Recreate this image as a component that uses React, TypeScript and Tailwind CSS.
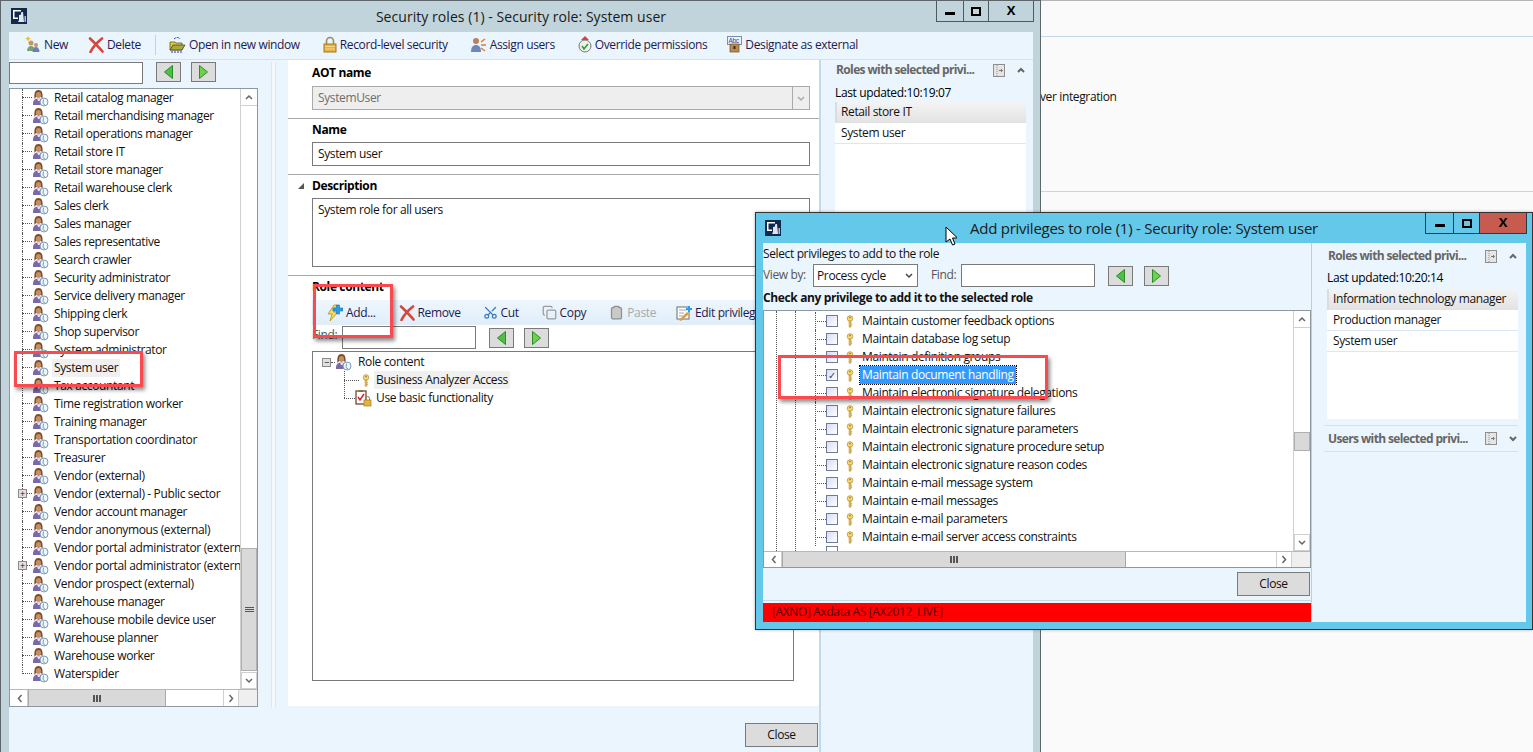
import React from 'react';
import { Scissors, Copy, Clipboard } from 'lucide-react';

const ROLES = [
  'Retail catalog manager', 'Retail merchandising manager', 'Retail operations manager', 'Retail store IT',
  'Retail store manager', 'Retail warehouse clerk', 'Sales clerk', 'Sales manager', 'Sales representative',
  'Search crawler', 'Security administrator', 'Service delivery manager', 'Shipping clerk', 'Shop supervisor',
  'System administrator', 'System user', 'Tax accountant', 'Time registration worker', 'Training manager',
  'Transportation coordinator', 'Treasurer', 'Vendor (external)', 'Vendor (external) - Public sector',
  'Vendor account manager', 'Vendor anonymous (external)', 'Vendor portal administrator (extern',
  'Vendor portal administrator (extern', 'Vendor prospect (external)', 'Warehouse manager',
  'Warehouse mobile device user', 'Warehouse planner', 'Warehouse worker', 'Waterspider',
];

const EXPANDABLE = [22, 26];

const PRIVILEGES = [
  'Maintain customer feedback options', 'Maintain database log setup', 'Maintain definition groups',
  'Maintain document handling', 'Maintain electronic signature delegations', 'Maintain electronic signature failures',
  'Maintain electronic signature parameters', 'Maintain electronic signature procedure setup',
  'Maintain electronic signature reason codes', 'Maintain e-mail message system', 'Maintain e-mail messages',
  'Maintain e-mail parameters', 'Maintain e-mail server access constraints',
];

function UserIcon() {
  return (
    <svg width="17" height="18" viewBox="0 0 17 18" className="shrink-0">
      <path d="M1 15c0-4 2-5.500 5.500-5.500S12 11 12 13v3H1z" fill="#7a68ad" />
      <path d="M5 9.500h3.500L7.500 12H6z" fill="#e8e4ee" />
      <path d="M2.500 10C2 4 3 1 6.500 1S11 4 10.500 9.500L9 8H4z" fill="#7b4d28" />
      <ellipse cx="6.500" cy="6" rx="2.600" ry="3" fill="#c58f66" />
      <circle cx="12" cy="13" r="4" fill="#eef5fb" stroke="#7f9cb8" />
      <path d="M11.500 10.500l-.5 4 2 1.500" fill="none" stroke="#7f9cb8" />
    </svg>
  );
}

function KeyIcon() {
  return (
    <svg width="8" height="13" viewBox="0 0 8 15" className="shrink-0">
      <circle cx="4" cy="4" r="3.200" fill="#f6d878" stroke="#c29a3a" />
      <circle cx="4" cy="3" r=".9" fill="#7a6a3a" />
      <path d="M3 7h2v7H3zM5 10h1.500M5 12h1.500" fill="#eac458" stroke="#b08a30" strokeWidth=".7" />
    </svg>
  );
}

function Logo() {
  return (
    <svg width="16" height="16" viewBox="0 0 16 16" className="shrink-0">
      <rect width="16" height="16" fill="#12294f" />
      <path d="M2 2h8v1.500H3.500v6H7V11H2z" fill="#fff" />
      <path d="M8 7h1.500l1-3h1.500l1 10H7l1-2z" fill="#dfe6ee" />
      <path d="M13.500 8H15v6h-1.500z" fill="#aebccc" />
    </svg>
  );
}

function NewIcon() {
  return (
    <svg width="17" height="17" viewBox="0 0 17 17" className="shrink-0">
      <path d="M4 0l1 2 2 .5-2 1L4 6 3 3.500 1 2.500 3 2z" fill="#f1b92e" />
      <circle cx="7" cy="7" r="2.500" fill="#c69468" />
      <path d="M3 15c0-3 1.500-5 4-5s4 2 4 5z" fill="#79a26f" />
      <circle cx="12" cy="9" r="2" fill="#c69468" />
      <path d="M8.500 16c0-3 1.500-5 3.500-5s3.500 2 3.500 5z" fill="#6a7fb5" />
    </svg>
  );
}

function RedX({ size = 16 }: { size?: number }) {
  return (
    <svg width={size} height={size} viewBox="0 0 16 16" className="shrink-0">
      <path d="M2 1.500c4 3.500 8 8 12.500 13M14 1.500C9 5.500 5 9.500 2.500 15" fill="none" stroke="#d9443b" strokeWidth="2.600" strokeLinecap="round" />
    </svg>
  );
}

function FolderIcon() {
  return (
    <svg width="17" height="17" viewBox="0 0 17 17" className="shrink-0">
      <path d="M5 3c2-2 5-2 6 0" fill="none" stroke="#27408b" strokeDasharray="2 1" />
      <path d="M1 6h5l1 1h6v7H1z" fill="#e4c64c" stroke="#5a5a20" strokeWidth=".8" />
      <path d="M1 14l3-5h12l-3 5z" fill="#a8a83c" stroke="#4a4a1c" strokeWidth=".8" />
      <path d="M2 16h12" stroke="#2233cc" strokeDasharray="2 1" />
    </svg>
  );
}

function LockIcon() {
  return (
    <svg width="14" height="17" viewBox="0 0 14 17" className="shrink-0">
      <path d="M3.500 8V5a3.500 3.500 0 017 0v3" fill="none" stroke="#9b8a5c" strokeWidth="1.600" />
      <rect x="1" y="8" width="12" height="8" fill="#e6b03f" stroke="#a9791f" />
      <path d="M2 10.500h10M2 13h10" stroke="#f6d98a" />
    </svg>
  );
}

function AssignIcon() {
  return (
    <svg width="17" height="17" viewBox="0 0 17 17" className="shrink-0">
      <circle cx="6" cy="5" r="3" fill="#b9805a" />
      <path d="M1 16c0-5 2-7 5-7s5 2 5 7z" fill="#6f86b8" />
      <path d="M11 6l4-3M11 9h5M11 12l4 3" stroke="#e57b25" strokeWidth="1.500" />
    </svg>
  );
}

function OverrideIcon() {
  return (
    <svg width="14" height="17" viewBox="0 0 14 17" className="shrink-0">
      <circle cx="7" cy="10" r="6" fill="#eee" stroke="#777" />
      <path d="M4 10l2 3 4-5" fill="none" stroke="#2aa32a" strokeWidth="1.600" />
      <path d="M7 0l4 4H3z" fill="#d9423a" />
    </svg>
  );
}

function DesignateIcon() {
  return (
    <svg width="15" height="17" viewBox="0 0 15 17" className="shrink-0">
      <rect x=".5" y=".5" width="14" height="8" fill="#eef3fb" stroke="#7d8fb0" />
      <text x="1.500" y="7" fontSize="6.500" fill="#2c3f9e" fontFamily="Liberation Sans">Abc</text>
      <rect x="3" y="8" width="9" height="8" fill="#b98a4d" stroke="#6e5128" strokeWidth=".7" />
      <rect x="6.500" y="10" width="2" height="3" fill="#3a2c14" />
    </svg>
  );
}

function AddIcon() {
  return (
    <svg width="16" height="18" viewBox="0 0 16 18" className="shrink-0">
      <path d="M7 1L1 10h4l-2 7 8-9H7l3-7z" fill="#f5d860" stroke="#b59320" strokeWidth=".8" />
      <path d="M9.500 1h3v3H16v3h-3.500v3h-3V7H6V4h3.500z" fill="#2c9be8" stroke="#1a6fb5" strokeWidth=".6" />
    </svg>
  );
}

function EditIcon() {
  return (
    <svg width="16" height="16" viewBox="0 0 16 16" className="shrink-0">
      <rect x="1" y="2" width="12" height="12" fill="#fff" stroke="#6b6b6b" />
      <path d="M3 5h8M3 8h5M3 11h4" stroke="#9aa7b8" />
      <path d="M3 15l8-8 2 2-8 7z" fill="#e09a3c" />
      <path d="M12 1h2v2h2v2h-2v2h-2V5h-2V3h2z" fill="#2c9be8" />
    </svg>
  );
}

function ChecklistIcon() {
  return (
    <svg width="17" height="18" viewBox="0 0 17 18" className="shrink-0">
      <rect x="1" y="2" width="10" height="13" fill="#fff" stroke="#6e4a2c" strokeWidth="1.300" />
      <rect x="4" y="1" width="4" height="2" fill="#8d6b45" />
      <path d="M3 8l2 3 4-6" fill="none" stroke="#d11f2d" strokeWidth="1.500" />
      <path d="M10.500 11V9.500a2 2 0 014 0V11" fill="none" stroke="#8e7a4c" />
      <rect x="9" y="11" width="7" height="6" fill="#e5b33e" stroke="#a67a1e" strokeWidth=".7" />
    </svg>
  );
}

function DockIcon() {
  return (
    <svg width="12" height="13" viewBox="0 0 12 13" className="shrink-0">
      <rect x=".5" y=".5" width="11" height="12" fill="#e5e5e5" stroke="#8f8f8f" />
      <path d="M4 1v11" stroke="#8f8f8f" strokeDasharray="1 1" />
      <path d="M6 6.500h3M8 5l1.500 1.500L8 8" fill="none" stroke="#777" />
    </svg>
  );
}

function Chevron({ dir, color = '#666', width = 1.500 }: { dir: 'up' | 'down' | 'left' | 'right'; color?: string; width?: number }) {
  const points = {
    up: '2,7 5,4 8,7',
    down: '2,4 5,7 8,4',
    left: '6.500,2 3.500,5.500 6.500,9',
    right: '3.500,2 6.500,5.500 3.500,9',
  }[dir];
  return (
    <svg width="10" height="11" viewBox="0 0 10 11" className="shrink-0">
      <polyline points={points} fill="none" stroke={color} strokeWidth={width} />
    </svg>
  );
}

function ArrowButton({ dir }: { dir: 'left' | 'right' }) {
  return (
    <button className="w-[25px] h-[20px] bg-[#dcdcdc] border border-[#7a7a7a] flex items-center justify-center">
      <svg width="9" height="14" viewBox="0 0 9 14">
        {dir === 'left'
          ? <path d="M8.500 .5v13L.5 7z" fill="#4fc045" stroke="#2b8c2b" />
          : <path d="M.5 .5v13l8-6.500z" fill="#6fd04a" stroke="#2b8c2b" />}
      </svg>
    </button>
  );
}

function WindowButtons({ active }: { active?: boolean }) {
  return (
    <div className={active ? 'flex h-[21px] border border-t-0 border-[#2b3a42] mr-[5px]' : 'flex h-[21px] border border-t-0 border-[#4d5a60] -mr-[1px]'}>
      <div className={active ? 'w-[28px] flex items-center justify-center border-r border-[#2b3a42]' : 'w-[27px] flex items-center justify-center border-r border-[#4d5a60]'}>
        <div className="w-[10px] h-[3px] bg-black mt-[4px]" />
      </div>
      <div className={active ? 'w-[26px] flex items-center justify-center border-r border-[#2b3a42]' : 'w-[25px] flex items-center justify-center border-r border-[#4d5a60]'}>
        <div className="w-[10px] h-[9px] border-2 border-black" />
      </div>
      <div className={active ? 'w-[46px] flex items-center justify-center bg-[#c75b50] text-[13px] font-bold text-black' : 'w-[44px] flex items-center justify-center text-[13px] font-bold text-black'}>
        X
      </div>
    </div>
  );
}

function TitleBar({ title, active }: { title: string; active?: boolean }) {
  return (
    <div className={active ? 'grid grid-cols-[1fr_auto_1fr] h-[30px]' : 'grid grid-cols-[1fr_auto_1fr] h-[31px]'}>
      <div className={active ? 'pl-[9px] pt-[7px]' : 'pl-[2px] pt-[7px]'}><Logo /></div>
      <div className={active
        ? 'pt-[5px] text-[15px] leading-[21px] tracking-[-0.25px] text-[#1a1a1a]'
        : 'pt-[6px] text-[14px] leading-[20px] tracking-[0.05px] text-[#1a1a1a]'}>{title}</div>
      <div className="flex justify-end items-start"><WindowButtons active={active} /></div>
    </div>
  );
}

function ToolItem({ icon, label, className, muted }: { icon: React.ReactNode; label: string; className: string; muted?: boolean }) {
  return (
    <div className={`flex items-center ${className}`}>
      {icon}
      <span className={muted ? 'ml-[3px] text-[#a9a9a9] whitespace-nowrap' : 'ml-[3px] text-[#1e1a50] whitespace-nowrap'}>{label}</span>
    </div>
  );
}

function VScrollBar({ before, thumb, after }: { before: number; thumb: number; after: number }) {
  return (
    <div className="w-[17px] h-full flex flex-col border-l border-[#d0d0d0] bg-white shrink-0">
      <div className="h-[17px] flex items-center justify-center border-b border-[#d0d0d0]"><Chevron dir="up" /></div>
      <div style={{ height: before }} />
      <div style={{ height: thumb }} className="bg-[#d9d9d9] border border-[#b0b0b0] flex flex-col items-center justify-center gap-[1px]">
        {thumb > 40 && <><div className="w-[9px] h-[1px] bg-[#555]" /><div className="w-[9px] h-[1px] bg-[#555]" /><div className="w-[9px] h-[1px] bg-[#555]" /></>}
      </div>
      <div style={{ height: after }} />
      <div className="h-[17px] flex items-center justify-center border border-[#d0d0d0]"><Chevron dir="down" /></div>
    </div>
  );
}

function HScrollBar({ thumb, after }: { thumb: number; after: number }) {
  return (
    <div className="h-[17px] flex border-t border-[#b8b8b8] bg-white">
      <div className="ml-[2px] w-[16px] flex items-center justify-center border-r border-[#d0d0d0]"><Chevron dir="left" /></div>
      <div style={{ width: thumb }} className="bg-[#d9d9d9] border-x border-[#a8a8a8] flex items-center justify-center gap-[1px]">
        <div className="w-[2px] h-[7px] bg-[#555]" /><div className="w-[2px] h-[7px] bg-[#555]" /><div className="w-[2px] h-[7px] bg-[#555]" />
      </div>
      <div style={{ width: after }} />
      <div className="w-[16px] flex items-center justify-center border-x border-[#d0d0d0]"><Chevron dir="right" /></div>
      <div className="flex-1 bg-[#efefef]" />
    </div>
  );
}

function RoleRow({ name, index, last }: { name: string; index: number; last: boolean }) {
  return (
    <div className="relative flex items-center h-[18px] pl-[12px] overflow-hidden">
      <div className={last ? 'w-[10px] h-[9px] shrink-0 self-start border-l border-b border-dotted border-[#555]' : 'w-[10px] h-[18px] shrink-0 self-start'}>
        {!last && <div className="h-[9px] border-b border-dotted border-[#555]" />}
      </div>
      {!last && <div className="absolute left-[12px] top-0 h-[18px] border-l border-dotted border-[#555]" />}
      {EXPANDABLE.includes(index) && (
        <div className="absolute left-[8px] top-[4px] w-[9px] h-[9px] bg-[#e0e0e0] border border-[#8a8a8a] flex items-center justify-center text-[9px] leading-none">+</div>
      )}
      <UserIcon />
      <span className={name === 'System user' ? 'ml-[3px] px-[2px] bg-[#f0f0f0] whitespace-nowrap' : 'ml-[3px] px-[2px] whitespace-nowrap'}>{name}</span>
    </div>
  );
}

function RoleTree() {
  return (
    <div className="h-[619px] bg-white border border-[#8c9aa0] flex flex-col">
      <div className="flex h-[600px]">
        <div className="flex-1 min-w-0 overflow-hidden">
          {ROLES.map((name, i) => <RoleRow key={i} name={name} index={i} last={i === ROLES.length - 1} />)}
        </div>
        <VScrollBar before={442} thumb={123} after={1} />
      </div>
      <HScrollBar thumb={138} after={57} />
    </div>
  );
}

function Section({ label, children, toggle, first }: { label: string; children: React.ReactNode; toggle?: boolean; first?: boolean }) {
  return (
    <div className="relative pl-[24px] pr-[9px] border-b border-[#a9a9a9] pb-[8px]">
      {toggle && <div className="absolute left-[10px] top-[8px] w-0 h-0 border-l-[6px] border-l-transparent border-b-[6px] border-b-[#555]" />}
      <div className={first ? 'font-bold leading-[16px] text-black pt-[5px] pb-[5px]' : 'font-bold leading-[16px] text-black pt-[3px] pb-[4px]'}>{label}</div>
      {children}
    </div>
  );
}

function CenterPanel() {
  return (
    <div className="h-[646px] bg-white flex flex-col">
      <Section label="AOT name" first>
        <div className="h-[24px] bg-[#eeeeee] border border-[#aaaaaa] flex items-center justify-between pl-[5px] text-[#6d6d6d]">
          SystemUser
          <div className="w-[17px] h-full border-l border-[#aaaaaa] flex items-center justify-center"><Chevron dir="down" color="#aaa" /></div>
        </div>
      </Section>
      <Section label="Name">
        <div className="h-[24px] border border-[#7a7a7a] flex items-center pl-[5px]">System user</div>
      </Section>
      <Section label="Description" toggle>
        <div className="h-[69px] border border-[#7a7a7a] pl-[5px] pt-[2px]">System role for all users</div>
      </Section>
      <div className="pl-[24px] pr-[25px] relative">
        <div className="font-bold leading-[16px] pt-[3px] text-black">Role content</div>
        <div className="h-[25px] mt-[5px] bg-gradient-to-b from-[#eef6fd] to-[#e0eefa] flex items-center">
          <ToolItem className="ml-[15px]" icon={<AddIcon />} label="Add..." />
          <ToolItem className="ml-[23px]" icon={<RedX />} label="Remove" />
          <ToolItem className="ml-[22px]" icon={<Scissors size={15} color="#3b78c4" className="-rotate-90" />} label="Cut" />
          <ToolItem className="ml-[23px]" icon={<Copy size={15} color="#9a9a9a" />} label="Copy" />
          <ToolItem className="ml-[23px]" icon={<Clipboard size={15} color="#8f8f8f" fill="#c9c9c9" />} label="Paste" muted />
          <ToolItem className="ml-[20px]" icon={<EditIcon />} label="Edit privileges" />
        </div>
        <div className="flex items-center h-[25px]">
          <span className="w-[30px] text-[#555] -mt-[5px]">Find:</span>
          <div className="w-[134px] h-[23px] border border-[#7a7a7a] bg-white" />
          <div className="ml-[13px] flex gap-[10px]"><ArrowButton dir="left" /><ArrowButton dir="right" /></div>
        </div>
        <div className="h-[330px] mt-[1px] border border-[#7a7a7a] pt-[1px] pl-[9px]">
          <div className="relative flex items-center h-[18px]">
            <div className="w-[9px] h-[9px] bg-[#e0e0e0] border border-[#8a8a8a] flex items-center justify-center text-[9px] leading-none">−</div>
            <div className="w-[4px] border-b border-dotted border-[#555]" />
            <UserIcon />
            <span className="ml-[6px]">Role content</span>
          </div>
          <div className="relative flex items-center h-[18px] pl-[22px]">
            <div className="absolute left-[22px] top-0 h-[27px] border-l border-dotted border-[#555]" />
            <div className="w-[15px] border-b border-dotted border-[#555]" />
            <div className="ml-[3px]"><KeyIcon /></div>
            <span className="ml-[4px] px-[2px] bg-[#f0f0f0]">Business Analyzer Access</span>
          </div>
          <div className="flex items-center h-[18px] pl-[22px]">
            <div className="w-[11px] border-b border-dotted border-[#555]" />
            <ChecklistIcon />
            <span className="ml-[2px] px-[2px]">Use basic functionality</span>
          </div>
        </div>
      </div>
    </div>
  );
}

function RolesPanel({ updated, rows, heightClass, updatedClass }: { updated: string; rows: string[]; heightClass: string; updatedClass: string }) {
  return (
    <div className="pr-[7px]">
      <div className="flex items-center h-[18px] pl-[1px] font-bold text-[#666] tracking-[-0.62px]">
        <span className="w-[157px] whitespace-nowrap overflow-hidden">Roles with selected privi...</span>
        <DockIcon />
        <div className="ml-[11px]"><Chevron dir="up" width={2} /></div>
      </div>
      <div className={`h-[17px] leading-[17px] text-black ${updatedClass}`}>{updated}</div>
      <div className={`bg-white ${heightClass}`}>
        {rows.map((row, i) => (
          <div key={row} className={i === 0
            ? 'h-[21px] leading-[20px] pl-[4px] bg-gradient-to-b from-[#f4f4f4] to-[#e2e2e2] border-l-2 border-[#dcdcdc] whitespace-nowrap'
            : 'h-[21px] leading-[20px] pl-[6px] border-b border-[#dbe8f4] whitespace-nowrap'}>
            {row}
          </div>
        ))}
      </div>
    </div>
  );
}

function PrivilegeRow({ name }: { name: string }) {
  const selected = name === 'Maintain document handling';
  return (
    <div className="relative flex items-center h-[18px]">
      <div className="absolute left-[50px] top-0 h-[18px] border-l border-dotted border-[#555]" />
      <div className="w-[50px]" />
      <div className="w-[11px] border-b border-dotted border-[#555]" />
      <div className="w-[12px] h-[12px] border border-[#6e7a98] bg-gradient-to-br from-[#d8dcf5] to-white flex items-center justify-center text-[10px] leading-none text-[#444]">
        {selected && '✓'}
      </div>
      <div className="ml-[8px]"><KeyIcon /></div>
      <span className={selected
        ? 'ml-[6px] px-[2px] bg-[#3399ff] text-white outline-dotted outline-1 outline-black whitespace-nowrap'
        : 'ml-[6px] px-[2px] whitespace-nowrap'}>{name}</span>
    </div>
  );
}

function PrivilegeTree() {
  return (
    <div className="h-[258px] bg-white border border-[#8c9aa0] flex flex-col">
      <div className="flex h-[240px]">
        <div className="relative flex-1 overflow-hidden pl-[1px] pt-[1px]">
          <div className="absolute left-[12px] top-0 h-full border-l border-dotted border-[#555]" />
          <div className="absolute left-[31px] top-0 h-full border-l border-dotted border-[#555]" />
          {PRIVILEGES.map(p => <PrivilegeRow key={p} name={p} />)}
          <div className="ml-[61px] w-[12px] h-[12px] border border-[#6e7a98]" />
        </div>
        <VScrollBar before={104} thumb={19} after={83} />
      </div>
      <HScrollBar thumb={344} after={150} />
    </div>
  );
}

function PrivilegeDialog() {
  return (
    <div className="absolute left-[755px] top-[212px] w-[778px] h-[418px] bg-[#64c8ea] border border-[#333] flex flex-col shadow-[0_0_3px_rgba(0,0,0,0.3)]">
      <TitleBar title="Add privileges to role (1) - Security role: System user" active />
      <div className="ml-[7px] mr-[6px] h-[379px] bg-[#ebf5fe] flex">
        <div className="w-[548px] flex flex-col">
          <div className="h-[21px] leading-[21px]">Select privileges to add to the role</div>
          <div className="flex items-center h-[23px]">
            <span className="w-[50px] text-[#555] -mt-[2px]">View by:</span>
            <div className="w-[105px] h-[23px] bg-white border border-[#7a7a7a] flex items-center justify-between pl-[3px] pr-[3px]">
              Process cycle
              <Chevron dir="down" color="#444" />
            </div>
            <span className="ml-[13px] w-[30px] text-[#555] -mt-[2px]">Find:</span>
            <div className="w-[134px] h-[23px] bg-white border border-[#7a7a7a]" />
            <div className="ml-[13px] flex gap-[11px]"><ArrowButton dir="left" /><ArrowButton dir="right" /></div>
          </div>
          <div className="h-[23px] leading-[21px] font-bold">Check any privilege to add it to the selected role</div>
          <PrivilegeTree />
          <div className="flex justify-end h-[33px] pt-[4px] pr-[1px] border-b border-[#c9d9e4]">
            <button className="w-[73px] h-[24px] bg-[#dcdcdc] border border-[#7a7a7a]">Close</button>
          </div>
          <div className="mt-[2px] h-[19px] leading-[18px] bg-[#ff0000] text-[#5a0000] pl-[9px]">[AXNO] Axdata AS [AX2012_LIVE]</div>
        </div>
        <div className="w-[214px] border-l border-[#b8cfe0] pt-[4px] pl-[15px]">
          <RolesPanel updated="Last updated:10:20:14" updatedClass="mt-[4px] mb-[3px]" rows={['Information technology manager', 'Production manager', 'System user']} heightClass="h-[130px]" />
          <div className="-ml-[3px] mr-[7px] mt-[6px] h-[27px] border-y border-[#d4e2ee] flex items-center pl-[4px] font-bold text-[#666] tracking-[-0.62px]">
            <span className="w-[157px] whitespace-nowrap overflow-hidden">Users with selected privi...</span>
            <DockIcon />
            <div className="ml-[11px]"><Chevron dir="down" width={2} /></div>
          </div>
        </div>
      </div>
    </div>
  );
}

function RolesWindow() {
  return (
    <div className="absolute left-0 top-0 w-[1041px] h-[752px] pl-[8px] pr-[7px] bg-[#c1d4db] border-t border-r border-l border-[#5c666b] flex flex-col">
      <TitleBar title="Security roles (1) - Security role: System user" />
      <div className="h-[28px] pb-[2px] bg-[#ebf5fe] border-b border-[#d3e2ee] flex items-center">
        <ToolItem className="ml-[15px]" icon={<NewIcon />} label="New" />
        <ToolItem className="ml-[20px]" icon={<RedX />} label="Delete" />
        <div className="ml-[14px] h-[20px] border-l border-[#c4d2dc]" />
        <ToolItem className="ml-[13px]" icon={<FolderIcon />} label="Open in new window" />
        <ToolItem className="ml-[23px]" icon={<LockIcon />} label="Record-level security" />
        <ToolItem className="ml-[22px]" icon={<AssignIcon />} label="Assign users" />
        <ToolItem className="ml-[23px]" icon={<OverrideIcon />} label="Override permissions" />
        <ToolItem className="ml-[20px]" icon={<DesignateIcon />} label="Designate as external" />
      </div>
      <div className="flex-1 bg-[#ebf5fe] flex">
        <div className="w-[249px] shrink-0">
          <div className="flex h-[28px] pt-[2px]">
            <div className="w-[134px] h-[22px] bg-white border border-[#7a7a7a]" />
            <div className="ml-[13px] flex gap-[10px]"><ArrowButton dir="left" /><ArrowButton dir="right" /></div>
          </div>
          <RoleTree />
        </div>
        <div className="w-[30px] shrink-0 flex justify-center pt-[2px] h-[648px]">
          <div className="w-[5px] h-full border-x border-[#dfe7ee] bg-[#f3f8fc]" />
        </div>
        <div className="w-[531px] shrink-0">
          <CenterPanel />
          <div className="flex justify-end pt-[17px] pr-[1px]">
            <button className="w-[73px] h-[24px] bg-[#dcdcdc] border border-[#7a7a7a]">Close</button>
          </div>
        </div>
        <div className="flex-1 border-l-2 border-[#c6d9e6] pt-[1px] pl-[14px]">
          <RolesPanel updated="Last updated:10:19:07" updatedClass="mt-[5px] mb-[1px]" rows={['Retail store IT', 'System user']} heightClass="h-[300px]" />
        </div>
      </div>
    </div>
  );
}

function Annotation({ className }: { className: string }) {
  return <div className={`absolute border-[3px] border-[#fb4a4f] shadow-[2px_3px_4px_rgba(0,0,0,0.45)] ${className}`} />;
}

function BackgroundWindow() {
  return (
    <div className="h-[752px] pl-[1040px] bg-[#fafafa] border-t border-[#b5b5b5]">
      <div className="h-[36px] border-b border-[#c3d7e6]" />
      <div className="h-[155px] border-b border-[#c3d7e6] pt-[51px] leading-[17px]">
        <span className="block">ver integration</span>
      </div>
    </div>
  );
}

export default function App() {
  return (
    <div className="relative w-[1533px] h-[752px] overflow-hidden text-[12px] text-[#111] font-['Open_Sans',sans-serif] tracking-[-0.37px]">
      <BackgroundWindow />
      <RolesWindow />
      <PrivilegeDialog />
      <Annotation className="left-[14px] top-[351px] w-[129px] h-[36px]" />
      <Annotation className="left-[313px] top-[284px] w-[80px] h-[54px]" />
      <Annotation className="left-[778px] top-[355px] w-[270px] h-[44px]" />
      <svg width="12" height="20" viewBox="0 0 12 20" className="absolute left-[945px] top-[226px]">
        <path d="M1 1v15l4-3 2.500 6 2.500-1-2.500-6h5z" fill="#fff" stroke="#000" />
      </svg>
    </div>
  );
}
